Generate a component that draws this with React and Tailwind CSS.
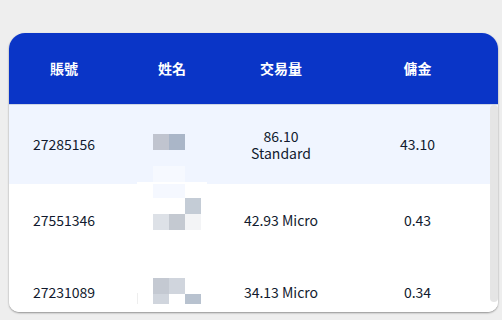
const COLS = 'grid grid-cols-[110px_106px_112px_161px]';

const ROWS = [
  {
    id: '27285156',
    volume: ['86.10', 'Standard'],
    commission: '43.10',
    h: 'h-[79px]',
    bg: 'bg-[#f0f5ff]',
    height: 79,
    blocks: [
      [16, 29, 16, 16, '#c0c4cf'],
      [32, 29, 16, 16, '#aab6c8'],
      [16, 61, 32, 16, '#f6f9ff'],
      [0, 77, 70, 2, '#ffffff'],
    ],
  },
  {
    id: '27551346',
    volume: ['42.93 Micro'],
    commission: '0.43',
    h: 'h-[72px]',
    bg: 'bg-white',
    height: 72,
    blocks: [
      [16, 0, 32, 14, '#f5f8ff'],
      [48, 14, 16, 16, '#c4ccd6'],
      [16, 30, 16, 16, '#dde1e7'],
      [32, 30, 16, 16, '#c4c9d1'],
      [48, 30, 16, 16, '#f3f4f6'],
    ],
  },
  {
    id: '27231089',
    volume: ['34.13 Micro'],
    commission: '0.34',
    h: 'h-[72px]',
    bg: 'bg-white',
    height: 72,
    blocks: [
      [16, 22, 16, 16, '#c4c9d2'],
      [32, 22, 16, 16, '#d0d5dd'],
      [16, 38, 16, 10, '#d0d5dd'],
      [48, 38, 16, 10, '#b8c2cf'],
      [0, 37, 1, 11, '#eeeeee'],
    ],
  },
];

function Mosaic({ height, blocks }) {
  return (
    <svg width="70" height={height} viewBox={`0 0 70 ${height}`} className="block">
      {blocks.map(([x, y, w, h, c], i) => (
        <rect key={i} x={x} y={y} width={w} height={h} fill={c} />
      ))}
    </svg>
  );
}

export default function App() {
  return (
    <div className="w-[502px] h-[320px] bg-[#eeeeee] pt-[33px] pl-[9px] font-['Noto_Sans_CJK_TC','Noto_Sans',sans-serif]">
      <div className="w-[489px] h-[279px] bg-white rounded-t-[16px] rounded-b-[10px] overflow-hidden shadow-[0_1px_2px_rgba(0,0,0,0.4)]">
        <div className={`${COLS} h-[72px] bg-[#0a35c7] border-b border-[#cdd5e4] items-center text-white text-[14px] font-bold`}>
          <div className="text-center">賬號</div>
          <div className="text-center">姓名</div>
          <div className="text-center">交易量</div>
          <div className="text-center">傭金</div>
        </div>
        <div className="relative h-[207px] overflow-hidden">
          {ROWS.map(r => (
            <div key={r.id} className={`${COLS} ${r.h} ${r.bg} items-center text-[14px] leading-[17px] text-[#111a2e]`}>
              <div className="text-center">{r.id}</div>
              <div className="flex justify-center self-stretch">
                <Mosaic height={r.height} blocks={r.blocks} />
              </div>
              <div className="text-center">
                {r.volume.map(v => <div key={v}>{v}</div>)}
              </div>
              <div className="text-center">{r.commission}</div>
            </div>
          ))}
          <div className="absolute right-0 top-0 w-[8px] h-[197px] rounded-full bg-[#e5e5e5]" />
        </div>
      </div>
    </div>
  );
}
